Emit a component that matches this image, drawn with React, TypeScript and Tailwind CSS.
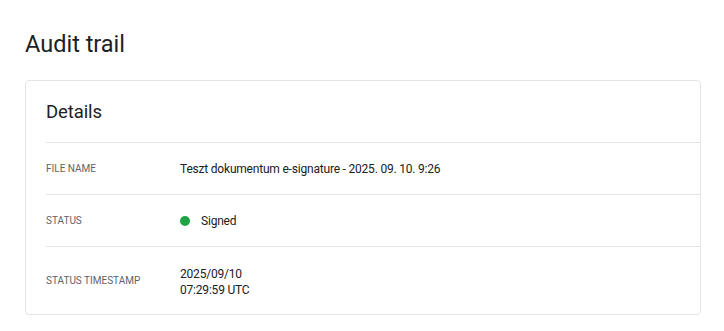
import React from "react";

export default function App() {
  return (
    <div className="w-[724px] h-[331px] bg-white pl-[25px] pr-[23px] pt-[30px] text-[#202124]" style={{ fontFamily: "Roboto, sans-serif" }}>
      <h1 className="text-[23.5px] leading-[28px] font-normal">Audit trail</h1>
      <div className="mt-[22px] border border-[#e4e4e4] rounded-[4px] pl-[20px]">
        <div className="h-[61px] flex items-center pt-[3px] text-[18.5px] tracking-[-0.1px] font-normal">Details</div>
        <div className="border-t border-[#e4e4e4] h-[52px] flex items-center">
          <div className="w-[134px] text-[10px] text-[#5f6368]">FILE NAME</div>
          <div className="text-[12px] tracking-[-0.2px]">Teszt dokumentum e-signature - 2025. 09. 10. 9:26</div>
        </div>
        <div className="border-t border-[#e4e4e4] h-[52px] flex items-center">
          <div className="w-[134px] text-[10px] text-[#5f6368]">STATUS</div>
          <div className="flex items-center gap-[11px] text-[12px] tracking-[-0.2px]">
            <span className="w-[10px] h-[10px] rounded-full bg-[#1ea446]" />
            Signed
          </div>
        </div>
        <div className="border-t border-[#e4e4e4] h-[68px] flex items-center">
          <div className="w-[134px] text-[10px] text-[#5f6368]">STATUS TIMESTAMP</div>
          <div className="text-[12px] tracking-[-0.2px] leading-[16px] pt-[3px]">
            <div>2025/09/10</div>
            <div>07:29:59 UTC</div>
          </div>
        </div>
      </div>
    </div>
  );
}
